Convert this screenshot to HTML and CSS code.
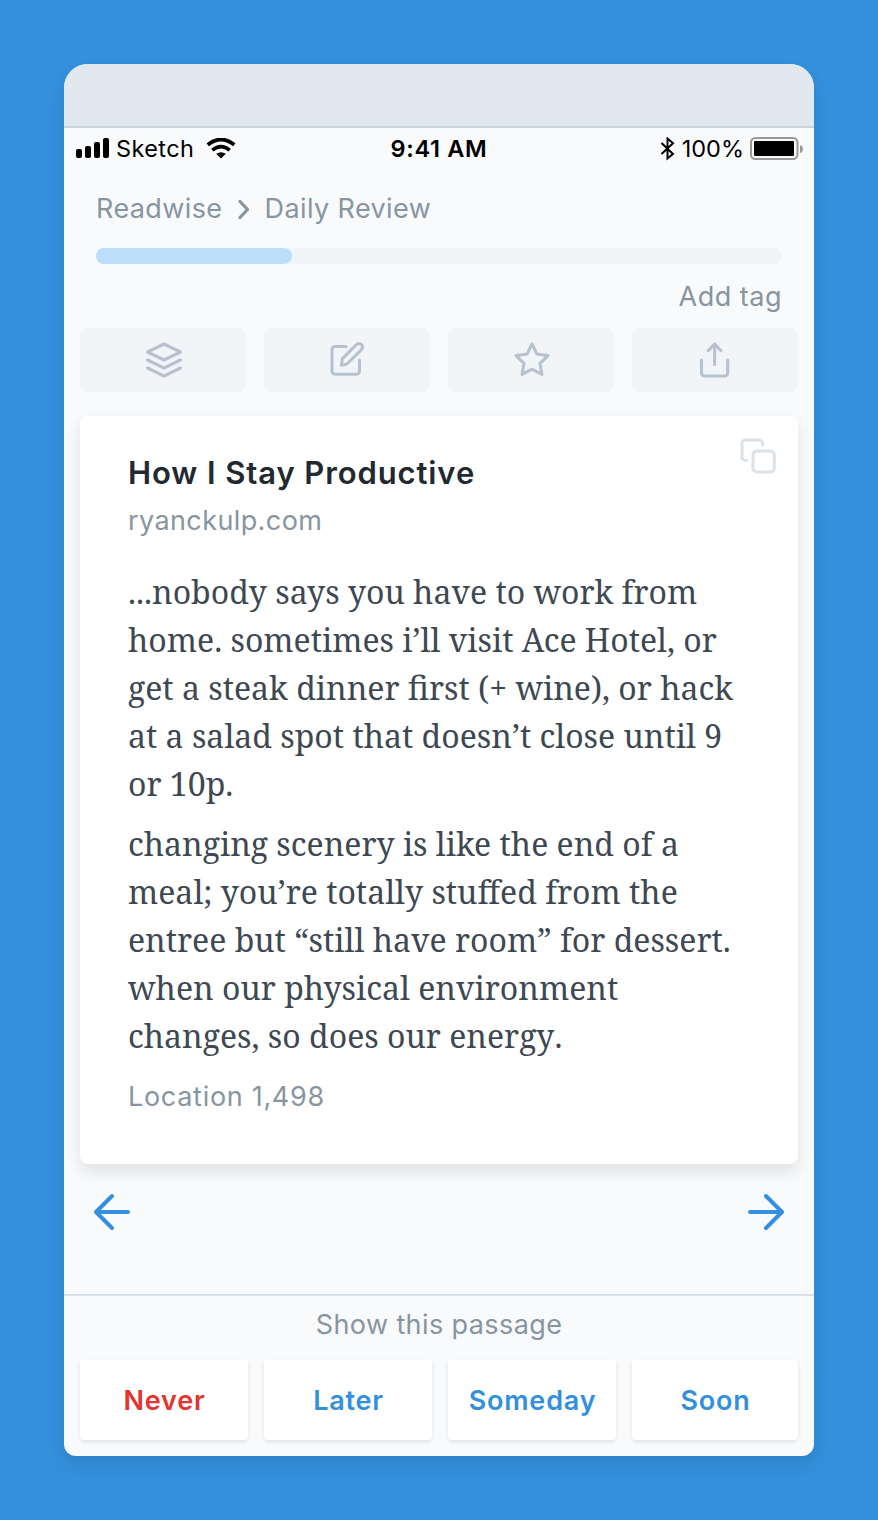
FILE: index.html
```html
<!DOCTYPE html>
<html lang="en">
<head>
<meta charset="utf-8">
<title>Daily Review</title>
<link rel="stylesheet" href="styles.css">
</head>
<body>
<main class="device">
  <div class="device-top"></div>
  <div class="status">
    <div class="status-left">
      <svg class="signal" width="34" height="22" viewBox="0 0 34 22"><rect x="0" y="11" width="6" height="9" rx="2"/><rect x="9" y="8" width="6" height="12" rx="2"/><rect x="18" y="4" width="6" height="16" rx="2"/><rect x="27" y="0" width="6" height="20" rx="2"/></svg>
      <span class="carrier">Sketch</span>
      <svg class="wifi" width="30" height="22" viewBox="0 0 30 22"><path d="M1.700 6.700Q15-3.700 28.300 6.700" fill="none" stroke="#000" stroke-width="3.700"/><path d="M6.300 12.200Q15 5 23.700 12.200" fill="none" stroke="#000" stroke-width="3.500"/><path d="M10.200 15.800Q15 12.500 19.800 15.800L15 20.500Z"/></svg>
    </div>
    <span class="time">9:41 AM</span>
    <div class="status-right">
      <svg width="16" height="24" viewBox="0 0 16 24"><path d="M1.500 6 13 17 7.500 21.500V1.500L13 6.300 1.500 17" fill="none" stroke="#000" stroke-width="2"/></svg>
      <span class="percent">100%</span>
      <svg class="battery" width="54" height="24" viewBox="0 0 54 24"><rect x="1" y="1" width="46.500" height="21" rx="4.500" fill="none" stroke="#999" stroke-width="2"/><rect x="4" y="4" width="40" height="15" rx="1"/><path d="M50 8Q53 9 53 12T50 16Z" fill="#999"/></svg>
    </div>
  </div>
  <nav class="crumbs"><span>Readwise</span><svg width="16" height="22" viewBox="0 0 16 22"><path d="M4 3.500 11.500 11.500 4 19.500" fill="none" stroke="#8795a1" stroke-width="3.200" stroke-linecap="round" stroke-linejoin="round"/></svg><span>Daily Review</span></nav>
  <div class="progress"><div class="progress-fill"></div></div>
  <div class="tag">Add tag</div>
  <div class="tools">
    <button class="tool"><svg class="icon" viewBox="0 0 40 40"><path d="M21 4 37.500 12 21 20 4.500 12ZM4.500 20 21 28 37.500 20M4.500 28 21 36 37.500 28"/></svg></button>
    <button class="tool"><svg class="icon" viewBox="0 0 40 40"><path d="M19 6.500H8A3 3 0 0 0 5 9.500V31A3 3 0 0 0 8 34.200H29.500A3 3 0 0 0 32.500 31V20M29.500 4.500A3.530 3.530 0 0 1 34.500 9.500L20 24 14.300 25.200 15.500 18.700Z"/></svg></button>
    <button class="tool"><svg class="icon" viewBox="0 0 40 40"><path d="M21 4 25.900 14 37 15.600 29 23.400 30.900 34.400 21 29.200 11.100 34.400 13 23.400 5 15.600 16.100 14Z"/></svg></button>
    <button class="tool"><svg class="icon" viewBox="0 0 40 40"><path d="M6.500 20V33A3 3 0 0 0 9.500 36H29.700A3 3 0 0 0 32.700 33V20M19.600 24.500V4M13.200 10.700 19.600 4 26 10.700"/></svg></button>
  </div>
  <article class="card">
    <svg class="copy" viewBox="0 0 40 40"><path d="M24.500 7V5.500A3.500 3.500 0 0 0 21 2H7.500A3.500 3.500 0 0 0 4 5.500V19A3.500 3.500 0 0 0 7.500 22.500H8.500"/><rect x="15" y="13" width="21.300" height="21" rx="4"/></svg>
    <h1 class="title">How I Stay Productive</h1>
    <div class="source">ryanckulp.com</div>
    <p class="quote">...nobody says you have to work from<br>home. sometimes i’ll visit Ace Hotel, or<br>get a steak dinner first (+ wine), or hack<br>at a salad spot that doesn’t close until 9<br>or 10p.</p>
    <p class="quote">changing scenery is like the end of a<br>meal; you’re totally stuffed from the<br>entree but “still have room” for dessert.<br>when our physical environment<br>changes, so does our energ<span class="unkerned">y.</span></p>
    <div class="location">Location 1,498</div>
  </article>
  <div class="pager">
    <svg width="40" height="40" viewBox="0 0 40 40"><path d="M36 20H4M20 4 4 20 20 36"/></svg>
    <svg width="40" height="40" viewBox="0 0 40 40"><path d="M4 20H36M20 4 36 20 20 36"/></svg>
  </div>
  <footer class="footer">
    <div class="prompt">Show this passage</div>
    <div class="choices">
      <button class="choice never">Never</button>
      <button class="choice">Later</button>
      <button class="choice">Someday</button>
      <button class="choice">Soon</button>
    </div>
  </footer>
</main>
</body>
</html>
```
FILE: styles.css
```css
* { box-sizing: border-box; }
body {
  margin: 0;
  height: 1520px;
  padding: 64px;
  background: #3490dc;
  color: #8795a1;
  font: 27px/36px Inter, sans-serif;
  letter-spacing: 0.4px;
}
svg { display: block; flex: none; }
button { border: 0; padding: 0; font: inherit; letter-spacing: inherit; }
.device {
  width: 750px;
  height: 1392px;
  display: flex;
  flex-direction: column;
  background: #f8fafc;
  border-radius: 24px 24px 12px 12px;
  box-shadow: 0 8px 16px rgba(0, 0, 0, .1);
}
.device-top {
  height: 64px;
  flex: none;
  background: #e2e8f0;
  border-bottom: 2px solid #cbd5e0;
  border-radius: 24px 24px 0 0;
}
.status {
  height: 42px;
  display: grid;
  grid-template-columns: 1fr auto 1fr;
  align-items: center;
  padding: 0 10px 0 12px;
  color: #000;
  font-size: 23.5px;
}
.status-left, .status-right { display: flex; align-items: center; }
.status-right { justify-content: flex-end; }
.carrier { margin: 0 12px 0 6px; letter-spacing: .4px; }
.time { font-weight: 600; letter-spacing: .7px; padding-right: 2px; }
.percent { margin: 0 6px; letter-spacing: 0; }
.crumbs { display: flex; align-items: center; gap: 13px; padding: 0 32px; margin-top: 21px; height: 36px; }
.progress { height: 16px; margin: 21px 32px 0; border-radius: 8px; background: #f1f5f8; flex: none; }
.progress-fill { width: 196px; height: 16px; border-radius: 8px; background: #bcdefa; }
.tag { text-align: right; margin: 15px 32px 0; height: 36px; letter-spacing: .5px; }
.tools { display: grid; grid-template-columns: repeat(4, 1fr); gap: 18px; margin: 13px 16px 0; }
.tool { height: 64px; display: flex; align-items: center; justify-content: center; border-radius: 8px; background: #f1f5f8; }
.icon { width: 40px; height: 40px; fill: none; stroke: #b8c2cf; stroke-width: 3.100; stroke-linecap: round; stroke-linejoin: round; }
.card {
  position: relative;
  height: 748px;
  flex: none;
  margin: 24px 16px 0;
  padding: 37px 48px 0;
  background: #fff;
  border-radius: 8px;
  box-shadow: 0 8px 16px rgba(0, 0, 0, .1);
}
.copy { position: absolute; top: 22px; right: 20px; width: 40px; height: 40px; fill: none; stroke: #dae1e7; stroke-width: 3; stroke-linecap: round; stroke-linejoin: round; }
.title { margin: 0; font-size: 31px; line-height: 40px; font-weight: 600; color: #22292f; letter-spacing: .9px; }
.source { margin-top: 10px; }
.quote {
  margin: 12px 0 0;
  color: #3d4852;
  font: 32px/48px "Noto Serif", "DejaVu Serif Condensed", "DejaVu Serif", serif;
  letter-spacing: 0;
  white-space: nowrap;
}
.source + .quote { margin-top: 29px; }
.unkerned { font-kerning: none; }
.location { margin-top: 19px; letter-spacing: .7px; }
.pager { display: flex; justify-content: space-between; margin: 28px 28px 0 28px; }
.pager svg { fill: none; stroke: #3490dc; stroke-width: 4; stroke-linecap: round; stroke-linejoin: round; }
.footer { margin-top: 62px; padding: 11px 16px 0; border-top: 2px solid #dae1e7; }
.prompt { text-align: center; }
.choices { display: grid; grid-template-columns: 168px 168px 168px 166px; gap: 16px; margin-top: 17px; }
.choice { height: 80px; padding: 2px 0 0 1px; border-radius: 4px; background: #fff; color: #3490dc; font-weight: 600; letter-spacing: .8px; box-shadow: 0 2px 4px rgba(0, 0, 0, .1); }
.never { color: #e3342f; }
```
